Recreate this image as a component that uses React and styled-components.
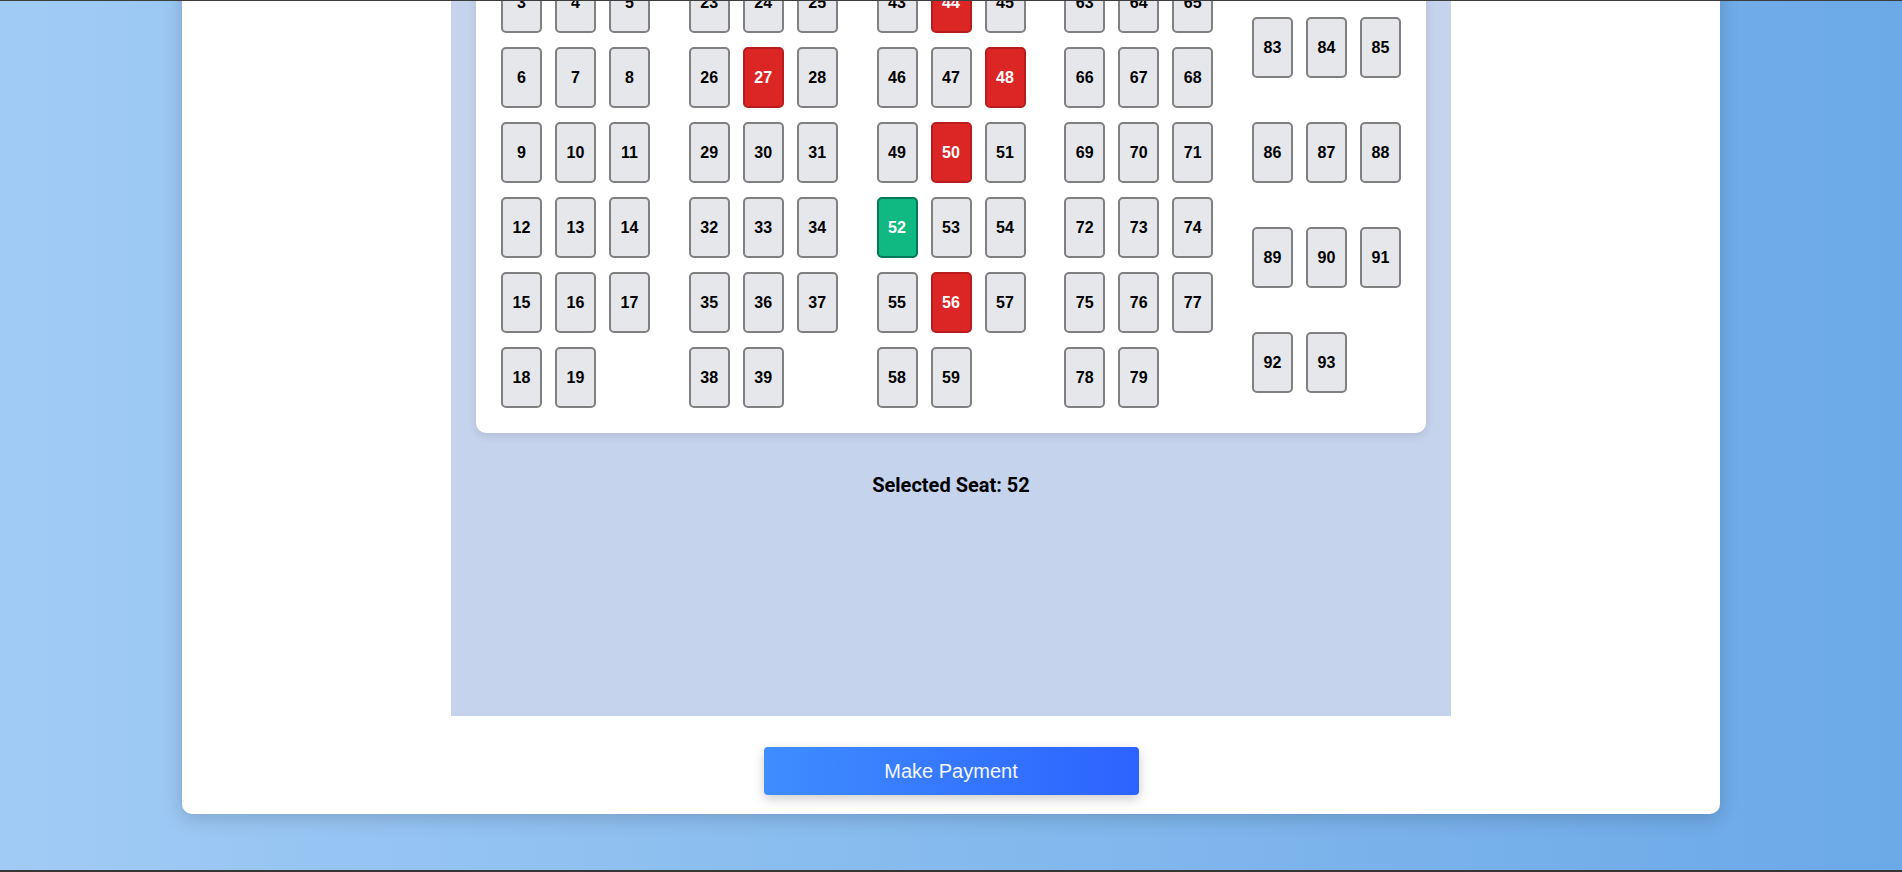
import React, { useState } from "react"
import styled, { createGlobalStyle } from "styled-components"

// Seat data

const booked = [27, 44, 48, 50, 56]

const makeGroup = (start, count) => {
    const rows = []
    for (let i = 0; i < count; i += 3) {
        const row = []
        for (let j = i; j < Math.min(i + 3, count); j++) row.push(start + j)
        rows.push(row)
    }
    return rows
}

const groups = [
    makeGroup(0, 20),
    makeGroup(20, 20),
    makeGroup(40, 20),
    makeGroup(60, 20),
    makeGroup(80, 14),
]

// Components

const GlobalStyle = createGlobalStyle`
    * {
        box-sizing: border-box;
    }
    html, body {
        margin: 0;
        padding: 0;
        font-family: "Liberation Sans", Arial, sans-serif;
    }
`

const Page = styled.div`
    height: 100vh;
    overflow: hidden;
    display: flex;
    flex-direction: column;
    justify-content: flex-end;
    align-items: center;
    padding-bottom: 56px;
    background: linear-gradient(to right, #a0cbf5, #6ba9e7);
    border-top: 1px solid #3d3d3d;
    border-bottom: 2px solid #363636;
`

const Card = styled.div`
    width: 1538px;
    flex-shrink: 0;
    background: #fff;
    border-radius: 10px;
    padding: 20px 0 19px;
    display: flex;
    flex-direction: column;
    align-items: center;
    box-shadow: 0 4px 20px rgba(0, 0, 0, 0.18);
`

const BusPanel = styled.div`
    width: 1000px;
    background: #c5d3ec;
    padding: 25px 25px 219px;
`

const SeatBoard = styled.div`
    background: #fff;
    border-radius: 10px;
    padding: 25px;
    display: flex;
    justify-content: space-between;
    align-items: stretch;
    box-shadow: 0 3px 10px rgba(0, 0, 0, 0.1);
`

const Group = styled.div`
    display: flex;
    flex-direction: column;
    justify-content: space-around;
    gap: 14px;
    width: 149px;
`

const SeatRow = styled.div`
    display: flex;
    gap: 13px;
`

const Seat = styled.button`
    width: 41px;
    height: 61px;
    padding: 0;
    border-radius: 5px;
    border: 2px solid ${props => props.status === "booked" ? "#b91c1c" : props.status === "selected" ? "#047857" : "#808080"};
    background: ${props => props.status === "booked" ? "#dc2626" : props.status === "selected" ? "#10b981" : "#e5e7eb"};
    color: ${props => props.status === "booked" || props.status === "selected" ? "#fff" : "#000"};
    font-family: "Liberation Sans", Arial, sans-serif;
    font-weight: 700;
    font-size: 16px;
    display: flex;
    align-items: center;
    justify-content: center;
    cursor: pointer;
`

const SelectedText = styled.p`
    margin: 40px 0 0;
    text-align: center;
    font-family: Roboto, "Liberation Sans", sans-serif;
    font-weight: 700;
    font-size: 20px;
    color: #000;
`

const PayButton = styled.button`
    margin-top: 31px;
    width: 375px;
    height: 48px;
    border: none;
    border-radius: 4px;
    background: linear-gradient(to right, #3f8dff, #2c63ff);
    color: #f4f7ff;
    font-family: "Liberation Sans", Arial, sans-serif;
    font-size: 20px;
    cursor: pointer;
    box-shadow: 0 4px 12px rgba(0, 0, 0, 0.2);
`

// App

const App = () => {
    const [selected, setSelected] = useState(52)

    const statusOf = (n) => {
        if (booked.includes(n)) return "booked"
        if (n === selected) return "selected"
        return "free"
    }

    return (
        <Page>
            <GlobalStyle />
            <Card>
                <BusPanel>
                    <SeatBoard>
                        {groups.map((rows, gi) => (
                            <Group key={gi}>
                                {rows.map((row, ri) => (
                                    <SeatRow key={ri}>
                                        {row.map((n) => (
                                            <Seat
                                                key={n}
                                                status={statusOf(n)}
                                                onClick={() => !booked.includes(n) && setSelected(n)}
                                            >
                                                {n}
                                            </Seat>
                                        ))}
                                    </SeatRow>
                                ))}
                            </Group>
                        ))}
                    </SeatBoard>
                    <SelectedText>Selected Seat: {selected}</SelectedText>
                </BusPanel>
                <PayButton>Make Payment</PayButton>
            </Card>
        </Page>
    )
}

export default App
